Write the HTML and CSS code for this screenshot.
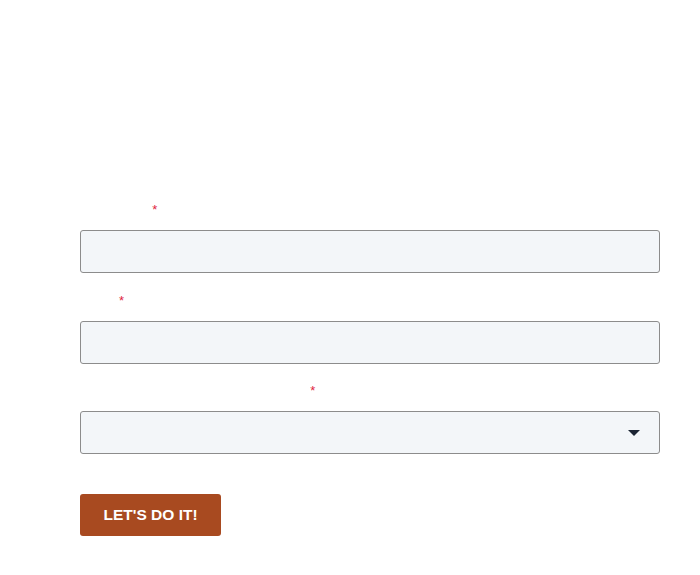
FILE: index.html
```html
<!DOCTYPE html>
<html lang="en">
<head>
<meta charset="utf-8">
<title>Get started</title>
<link rel="stylesheet" href="styles.css">
</head>
<body>
<main class="page">
  <form class="signup-form">
    <div class="field">
      <label class="field-label" for="first-name">First Name <span class="req">*</span></label>
      <input class="field-input" id="first-name" type="text">
    </div>
    <div class="field">
      <label class="field-label" for="email">Email <span class="req">*</span></label>
      <input class="field-input" id="email" type="email">
    </div>
    <div class="field">
      <label class="field-label" for="role">What best describes your work role? <span class="req">*</span></label>
      <div class="select-wrap">
        <select class="field-input field-select" id="role">
          <option value=""></option>
        </select>
        <svg class="select-caret" width="12" height="6" viewBox="0 0 12 6" aria-hidden="true"><path d="M0 0h12L6 6z" fill="#1b2433"/></svg>
      </div>
    </div>
    <button class="submit-btn" type="button">LET'S DO IT!</button>
  </form>
</main>
</body>
</html>
```

FILE: styles.css
```css
* { box-sizing: border-box; }

html, body {
  margin: 0;
  background: #ffffff;
  font-family: "Liberation Sans", Arial, sans-serif;
}

.page {
  padding: 200px 0 0 80px;
}

.signup-form {
  width: 580px;
  display: flex;
  flex-direction: column;
}

.field {
  display: flex;
  flex-direction: column;
  margin-bottom: 17.5px;
}

.field-label {
  font-size: 14px;
  line-height: 20px;
  height: 20px;
  color: #ffffff;
  margin-bottom: 10px;
}

.req {
  color: #e0253d;
  font-size: 13px;
  vertical-align: 2px;
}

.field-input {
  width: 100%;
  height: 43px;
  border: 1px solid #8c8c8c;
  border-radius: 3px;
  background: #f3f6f9;
  font: inherit;
  padding: 0 12px;
  margin: 0;
}

.select-wrap {
  position: relative;
}

.field-select {
  appearance: none;
  -webkit-appearance: none;
  display: block;
}

.select-caret {
  position: absolute;
  right: 20px;
  top: 19px;
  pointer-events: none;
}

.submit-btn {
  align-self: flex-start;
  margin-top: 22.5px;
  height: 42px;
  padding: 0 23.5px;
  border: none;
  border-radius: 3px;
  background: #a84a20;
  color: #ffffff;
  font-family: "Liberation Sans", Arial, sans-serif;
  font-weight: 700;
  font-size: 15.5px;
}
```
